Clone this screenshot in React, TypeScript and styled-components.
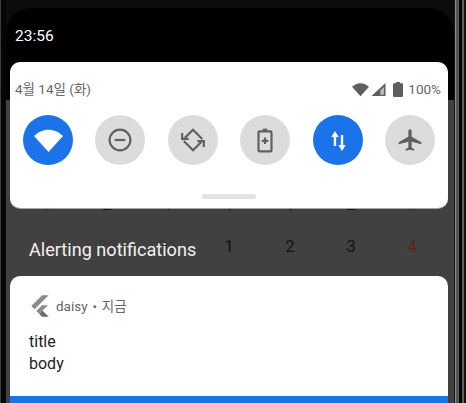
import React from 'react'
import styled, { createGlobalStyle } from 'styled-components'

const GlobalStyle = createGlobalStyle`
  html, body {
    margin: 0;
    padding: 0;
    background: #0c0c0c;
  }
  body {
    font-family: Roboto, "Noto Sans CJK KR", sans-serif;
  }
`

const WifiGlyph = ({ size }: { size: number }) => (
  <svg width={size} height={size} viewBox="0 0 24 24" fill="currentColor">
    <path d="M12 21.500 0 8.200C3.200 5 7.400 3 12 3s8.800 2 12 5.200L12 21.500z" />
  </svg>
)

const DndGlyph = () => (
  <svg width="26" height="26" viewBox="0 0 24 24" fill="none" stroke="currentColor" strokeWidth="2">
    <circle cx="12" cy="12" r="9.600" />
    <path d="M7 12h10" />
  </svg>
)

const RotateGlyph = () => (
  <svg width="26" height="26" viewBox="0 0 24 24" fill="none" stroke="currentColor" strokeWidth="2">
    <path d="M4.500 10 12 2.500 20.500 11" />
    <path d="M2 5.500V11h6" />
    <path d="M19.500 14 12 21.500 3.500 13" />
    <path d="M22 18.500V13h-6" />
  </svg>
)

const BatteryPlusGlyph = () => (
  <svg width="26" height="26" viewBox="0 0 24 24" fill="none">
    <path d="M10 1.500h4v2h-4z" fill="currentColor" />
    <rect x="6" y="4" width="12" height="18.500" rx="1" stroke="currentColor" strokeWidth="2" />
    <path d="M12 9.800v6M9 12.800h6" stroke="currentColor" strokeWidth="2" />
  </svg>
)

const DataGlyph = () => (
  <svg width="26" height="26" viewBox="0 0 24 24" fill="currentColor">
    <path d="M9.200 3.700 5.800 9.200h2.300v8.300h2.200V9.200h2.300L9.200 3.700z" />
    <path d="M15.700 22.200l3.400-5.600h-2.300V7.400h-2.200v9.200h-2.300l3.400 5.600z" />
  </svg>
)

const PlaneGlyph = () => (
  <svg width="26" height="26" viewBox="0 0 24 24" fill="currentColor">
    <path d="M22.500 16v-2l-9-5V3.500c0-.83-.67-1.500-1.500-1.500s-1.500.67-1.500 1.500V9l-9 5v2l9-2.500V19l-2.500 1.500V22l4-1 4 1v-1.500L13.500 19v-5.500l9 2.500z" />
  </svg>
)

const SignalGlyph = () => (
  <svg width="15" height="15" viewBox="0 0 15 15">
    <path d="M14.500 1v13H.5L14.500 1z" fill="#5f5f5f" />
    <path d="M13 5v7.800H9.200V8.500L13 5z" fill="#fff" opacity="0.55" />
  </svg>
)

const BatteryGlyph = () => (
  <svg width="10" height="15" viewBox="0 0 10 15" fill="#5f5f5f">
    <path d="M3 0h4v1.200h2a1 1 0 0 1 1 1V14a1 1 0 0 1-1 1H1a1 1 0 0 1-1-1V2.200a1 1 0 0 1 1-1h2V0z" />
  </svg>
)

const FlutterLogo = () => (
  <svg width="18" height="22" viewBox="2 0 20 24">
    <path d="M14.314 0 2.300 12 6 15.700 21.684.013h-7.357L14.314 0z" fill="#8a8a8a" />
    <path d="m14.314 11.072-6.471 6.457 3.200 3.200 3.270-3.200 6.446-6.467h-6.445z" fill="#8a8a8a" />
    <path d="m11.050 20.750 3.250 3.250h7.371l-6.446-6.460-.916-.09-3.259 3.300z" fill="#6a6a6a" />
  </svg>
)

const TILES = [
  { id: 'wifi', on: true, glyph: <WifiGlyph size={29} /> },
  { id: 'dnd', on: false, glyph: <DndGlyph /> },
  { id: 'rotate', on: false, glyph: <RotateGlyph /> },
  { id: 'battery', on: false, glyph: <BatteryPlusGlyph /> },
  { id: 'data', on: true, glyph: <DataGlyph /> },
  { id: 'plane', on: false, glyph: <PlaneGlyph /> },
]

const CALENDAR = [
  ['2', '2', '1', '1', '1', '2', '2'],
  ['29', '30', '31', '1', '2', '3', '4'],
]

const App = () => {
  return (
    <Phone>
      <GlobalStyle />
      <LeftEdge />
      <Screen>
        <StatusBar>23:56</StatusBar>

        {/* QUICK SETTINGS */}
        <Panel>
          <PanelHeader>
            <DateLabel>4월 14일 (화)</DateLabel>
            <StatusIcons>
              <StatusWifi>
                <WifiGlyph size={17} />
              </StatusWifi>
              <SignalGlyph />
              <BatterySlot>
                <BatteryGlyph />
              </BatterySlot>
              <Percent>100%</Percent>
            </StatusIcons>
          </PanelHeader>
          <TileRow>
            {TILES.map((tile) => (
              <Tile key={tile.id} $on={tile.on}>
                {tile.glyph}
              </Tile>
            ))}
          </TileRow>
          <Handle />
        </Panel>

        {/* DIMMED CALENDAR + SECTION TITLE */}
        <Shade>
          <Backdrop>
            {CALENDAR.map((row, rowIndex) =>
              row.map((day, dayIndex) => (
                <Day
                  key={`${rowIndex}-${dayIndex}`}
                  $muted={rowIndex === 1 && dayIndex < 3}
                  $red={dayIndex === 0 || dayIndex === 6}
                >
                  {day}
                </Day>
              )),
            )}
          </Backdrop>
          <ShadeTitle>Alerting notifications</ShadeTitle>
        </Shade>

        {/* NOTIFICATION */}
        <Card>
          <CardHeader>
            <FlutterLogo />
            <AppName>daisy • 지금</AppName>
          </CardHeader>
          <CardBody>
            <div>title</div>
            <div>body</div>
          </CardBody>
          <BlueBar />
        </Card>
      </Screen>
      <RightEdge />
    </Phone>
  )
}

export default App

const Phone = styled.div`
  display: flex;
  width: 466px;
  height: 403px;
  overflow: hidden;
  background: #0c0c0c;
`

const LeftEdge = styled.div`
  width: 6px;
  flex: none;
  background: linear-gradient(to right, #3c3c3c 0 1px, #050505 1px);
`

const RightEdge = styled.div`
  width: 12px;
  flex: none;
  background: linear-gradient(
    to right,
    #161616 0 1px,
    #8a8a8a 1px 2px,
    #555 2px 5px,
    #050505 5px 8px,
    #5e5e5e 8px 10px,
    #111 10px
  );
`

const Screen = styled.main`
  flex: 1;
  margin-top: 8px;
  padding: 0 6px 0 4px;
  display: flex;
  flex-direction: column;
  border-radius: 25px 25px 0 0;
  background: linear-gradient(to bottom, #000 0 92px, #414141 92px);
`

const StatusBar = styled.div`
  height: 54px;
  flex: none;
  box-sizing: border-box;
  padding: 19px 0 0 5px;
  color: #fff;
  font-size: 15.5px;
  line-height: 18px;
`

const Panel = styled.section`
  position: relative;
  z-index: 1;
  height: 146px;
  flex: none;
  display: flex;
  flex-direction: column;
  background: #fff;
  border-radius: 10px;
  box-shadow: 0 1px 0 rgba(190, 190, 190, 0.8);
`

const PanelHeader = styled.header`
  display: flex;
  align-items: center;
  justify-content: space-between;
  padding: 18px 7px 0 5px;
  height: 18px;
`

const DateLabel = styled.span`
  color: #666;
  font-size: 13.5px;
  line-height: 18px;
`

const StatusIcons = styled.div`
  display: flex;
  align-items: center;
  gap: 2px;
  color: #5f5f5f;
`

const StatusWifi = styled.span`
  display: flex;
`

const BatterySlot = styled.span`
  display: flex;
  margin-left: 5px;
`

const Percent = styled.span`
  margin-left: 3px;
  color: #666;
  font-size: 13.5px;
  line-height: 18px;
`

const TileRow = styled.div`
  display: flex;
  justify-content: space-between;
  padding: 17px 13px 0;
`

const Tile = styled.div<{ $on: boolean }>`
  width: 50px;
  height: 50px;
  border-radius: 50%;
  display: flex;
  align-items: center;
  justify-content: center;
  background: ${(p) => (p.$on ? '#1a73e8' : '#dcdcdc')};
  color: ${(p) => (p.$on ? '#fff' : '#5f5f5f')};
`

const Handle = styled.div`
  width: 54px;
  height: 5px;
  margin: 29px auto 0;
  border-radius: 3px;
  background: #e3e3e3;
`

const Shade = styled.section`
  position: relative;
  height: 68px;
  flex: none;
`

const Backdrop = styled.div`
  position: absolute;
  top: -25px;
  left: 5.5px;
  display: grid;
  grid-template-columns: repeat(7, 61px);
  grid-auto-rows: 42px;
`

const Day = styled.span<{ $muted: boolean; $red: boolean }>`
  display: flex;
  align-items: center;
  justify-content: center;
  font-size: 17px;
  color: ${(p) => {
    if (p.$muted) return p.$red ? '#4a3636' : '#383838'
    return p.$red ? '#5c2410' : '#141414'
  }};
`

const ShadeTitle = styled.h2`
  position: relative;
  margin: 0;
  padding: 30px 0 0 19px;
  color: #f2f2f2;
  font-size: 18.1px;
  font-weight: 400;
  line-height: 24px;
`

const Card = styled.section`
  flex: 1;
  display: flex;
  flex-direction: column;
  background: #fff;
  border-radius: 10px 10px 0 0;
  overflow: hidden;
`

const CardHeader = styled.header`
  display: flex;
  align-items: center;
  gap: 7px;
  padding: 19px 0 0 21px;
  height: 22px;
`

const AppName = styled.span`
  color: #666;
  font-size: 13.5px;
  line-height: 18px;
  word-spacing: 1.5px;
`

const CardBody = styled.div`
  padding: 14px 0 0 19px;
  color: #222;
  font-size: 16px;
  line-height: 22px;
`

const BlueBar = styled.div`
  height: 7px;
  margin-top: auto;
  background: #1a73e8;
`
